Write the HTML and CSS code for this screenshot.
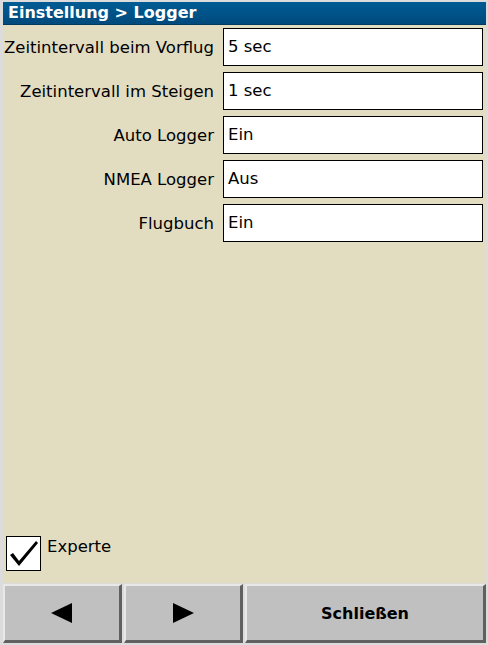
FILE: index.html
```html
<!DOCTYPE html>
<html>
<head>
<meta charset="utf-8">
<link rel="stylesheet" href="styles.css">
</head>
<body>
<div class="window">
  <div class="title">Einstellung &gt; Logger</div>
  <div class="content">
    <div class="rows">
      <div class="row"><div class="label">Zeitintervall beim Vorflug</div><div class="field">5 sec</div></div>
      <div class="row"><div class="label">Zeitintervall im Steigen</div><div class="field">1 sec</div></div>
      <div class="row"><div class="label">Auto Logger</div><div class="field">Ein</div></div>
      <div class="row"><div class="label">NMEA Logger</div><div class="field">Aus</div></div>
      <div class="row"><div class="label">Flugbuch</div><div class="field">Ein</div></div>
    </div>
    <div class="check">
      <div class="box">
        <svg width="33" height="33" viewBox="0 0 33 33"><path d="M3 18 L6 16 L12 24 L29 4 L31 6 L12 29 Z" fill="#000"/></svg>
      </div>
      <span>Experte</span>
    </div>
  </div>
  <div class="buttons">
    <div class="btn small"><svg width="22" height="20" viewBox="0 0 22 20"><path d="M0 10 L21 0 L21 20 Z" fill="#000"/></svg></div>
    <div class="btn small"><svg width="22" height="20" viewBox="0 0 22 20"><path d="M22 10 L1 0 L1 20 Z" fill="#000"/></svg></div>
    <div class="btn wide">Schließen</div>
  </div>
</div>
</body>
</html>
```
FILE: styles.css
```css
html, body {
  margin: 0;
  padding: 0;
  width: 488px;
  height: 645px;
  overflow: hidden;
  background: #dcdcdc;
}
body {
  font-family: "DejaVu Sans", sans-serif;
}
.window {
  box-sizing: border-box;
  width: 488px;
  height: 645px;
  padding: 2px 2px 2px 3px;
  display: flex;
  flex-direction: column;
  background: #dcdcdc;
}
.title {
  height: 22px;
  flex: none;
  background: linear-gradient(#005c94, #004a7c);
  color: #fff;
  font-weight: bold;
  font-size: 16px;
  line-height: 22px;
  padding-left: 5px;
  border-bottom: 1px solid #003a60;
}
.content {
  flex: 1;
  background: #e2dcc0;
  display: flex;
  flex-direction: column;
  justify-content: space-between;
  padding: 3px 0 12px 0;
}
.rows {
  display: flex;
  flex-direction: column;
  gap: 6px;
}
.row {
  display: flex;
  align-items: center;
  height: 38px;
}
.label {
  width: 211px;
  text-align: right;
  font-size: 16.5px;
  color: #000;
  padding-right: 9px;
}
.field {
  box-sizing: border-box;
  width: 260px;
  height: 38px;
  background: #fff;
  border: 1px solid #000;
  font-size: 16.5px;
  line-height: 36px;
  padding-left: 4px;
}
.check {
  display: flex;
  align-items: flex-start;
  margin-left: 3px;
  margin-top: -1px;
  gap: 6px;
}
.box {
  box-sizing: border-box;
  width: 35px;
  height: 35px;
  background: #fff;
  border: 1px solid #000;
  display: flex;
  align-items: center;
  justify-content: center;
}
.check span {
  font-size: 16.5px;
  line-height: 22px;
}
.buttons {
  display: flex;
  gap: 2px;
  height: 59px;
  flex: none;
  padding-top: 1px;
  background: #dcdcdc;
}
.btn {
  box-sizing: border-box;
  background: #c0c0c0;
  border-top: 2px solid #e8e8e8;
  border-left: 2px solid #e8e8e8;
  border-right: 3px solid #606060;
  border-bottom: 3px solid #606060;
  display: flex;
  align-items: center;
  justify-content: center;
  height: 59px;
}
.small { width: 119px; }
.wide {
  flex: 1;
  font-weight: bold;
  font-size: 16px;
  color: #000;
}
```
